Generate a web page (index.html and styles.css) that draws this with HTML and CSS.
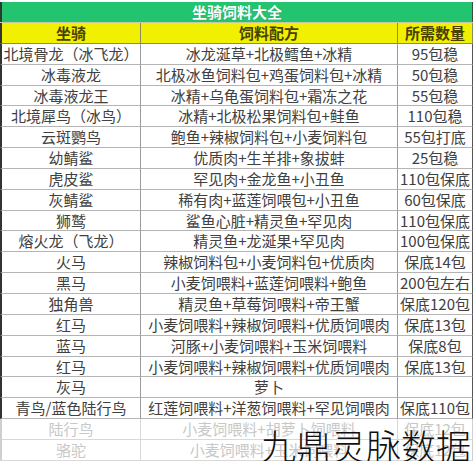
FILE: index.html
```html
<!DOCTYPE html>
<html lang="zh-CN">
<head>
<meta charset="utf-8">
<title>坐骑饲料大全</title>
<link rel="stylesheet" href="styles.css">
</head>
<body>
<div class="sheet">
  <div class="title">坐骑饲料大全</div>
  <div class="grid">
    <div class="c h first">坐骑</div><div class="c h">饲料配方</div><div class="c h last">所需数量</div>

    <div class="c first">北境骨龙（冰飞龙）</div><div class="c">冰龙涎草+北极鳕鱼+冰精</div><div class="c last">95包稳</div>
    <div class="c first">冰毒液龙</div><div class="c">北极冰鱼饲料包+鸡蛋饲料包+冰精</div><div class="c last">50包稳</div>
    <div class="c first">冰毒液龙王</div><div class="c">冰精+乌龟蛋饲料包+霜冻之花</div><div class="c last">55包稳</div>
    <div class="c first">北境犀鸟（冰鸟）</div><div class="c">冰精+北极松果饲料包+鲑鱼</div><div class="c last">110包稳</div>
    <div class="c first">云斑鹦鸟</div><div class="c">鲍鱼+辣椒饲料包+小麦饲料包</div><div class="c last">55包打底</div>
    <div class="c first">幼鲭鲨</div><div class="c">优质肉+生羊排+象拔蚌</div><div class="c last">25包稳</div>
    <div class="c first">虎皮鲨</div><div class="c">罕见肉+金龙鱼+小丑鱼</div><div class="c last">110包保底</div>
    <div class="c first">灰鲭鲨</div><div class="c">稀有肉+蓝莲饲喂包+小丑鱼</div><div class="c last">60包保底</div>
    <div class="c first">狮鹫</div><div class="c">鲨鱼心脏+精灵鱼+罕见肉</div><div class="c last">110包保底</div>
    <div class="c first">熔火龙（飞龙）</div><div class="c">精灵鱼+龙涎果+罕见肉</div><div class="c last">100包保底</div>
    <div class="c first">火马</div><div class="c">辣椒饲料包+小麦饲料包+优质肉</div><div class="c last">保底14包</div>
    <div class="c first">黑马</div><div class="c">小麦饲喂料+蓝莲饲喂料+鲍鱼</div><div class="c last">200包左右</div>
    <div class="c first">独角兽</div><div class="c">精灵鱼+草莓饲喂料+帝王蟹</div><div class="c last">保底120包</div>
    <div class="c first">红马</div><div class="c">小麦饲喂料+辣椒饲喂料+优质饲喂肉</div><div class="c last">保底13包</div>
    <div class="c first">蓝马</div><div class="c">河豚+小麦饲喂料+玉米饲喂料</div><div class="c last">保底8包</div>
    <div class="c first">红马</div><div class="c">小麦饲喂料+辣椒饲喂料+优质饲喂肉</div><div class="c last">保底13包</div>
    <div class="c first">灰马</div><div class="c">萝卜</div><div class="c last"></div>
    <div class="c first">青鸟/蓝色陆行鸟</div><div class="c">红莲饲喂料+洋葱饲喂料+罕见饲喂肉</div><div class="c last">保底110包</div>
    <div class="c first fade">陆行鸟</div><div class="c fade">小麦饲喂料+胡萝卜饲喂料</div><div class="c last fade">保底12包</div>
    <div class="c first fade">骆驼</div><div class="c fade">小麦饲喂料+玉米饲喂料</div><div class="c last fade">保底12包</div>
  </div>
  <div class="mark">九鼎灵脉数据</div>
</div>
</body>
</html>
```
FILE: styles.css
```css
html, body {
  margin: 0;
  padding: 0;
  background: #ffffff;
}
body {
  font-family: "Noto Sans CJK SC", "Microsoft YaHei", sans-serif;
  color: #404040;
}
.sheet {
  position: relative;
  width: 473px;
  padding-top: 2px;
}
.title {
  height: 20px;
  line-height: 20px;
  background: #22c46f;
  color: #ffffff;
  font-weight: bold;
  font-size: 15px;
  text-align: center;
  border-left: 2px solid #2b3a30;
  border-right: 1px solid #3a4a40;
  text-shadow: 0 0 1px rgba(0,0,0,0.25);
}
.grid {
  display: grid;
  grid-template-columns: 141px 257px 75px;
  grid-auto-rows: 20.85px;
  border-top: 1px solid #c8c8a0;
}
.c {
  box-sizing: border-box;
  border-right: 1px solid #9a9a9a;
  border-bottom: 1px solid #b4b4b4;
  font-size: 15px;
  line-height: 19px;
  text-align: center;
  white-space: nowrap;
  overflow: hidden;
}
.first {
  border-left: 2px solid #333333;
}
.last {
  border-right: 1px solid #555555;
}
.h {
  background: #f0f000;
  color: #4a4000;
  font-weight: bold;
  border-bottom: 1px solid #8a8a60;
  border-right-color: #8a8a60;
}
.grid .h:first-child {
  border-left-color: #333333;
}
.fade {
  color: #c8c8c8;
  border-right-color: #d8d8d8;
  border-bottom-color: #d8d8d8;
}
.first.fade {
  border-left-color: #cfcfcf;
}
.last.fade {
  border-right-color: #cfcfcf;
}
.mark {
  position: absolute;
  left: 261px;
  top: 428px;
  font-size: 35px;
  line-height: 34px;
  font-weight: 300;
  color: #111111;
  white-space: nowrap;
}
```
